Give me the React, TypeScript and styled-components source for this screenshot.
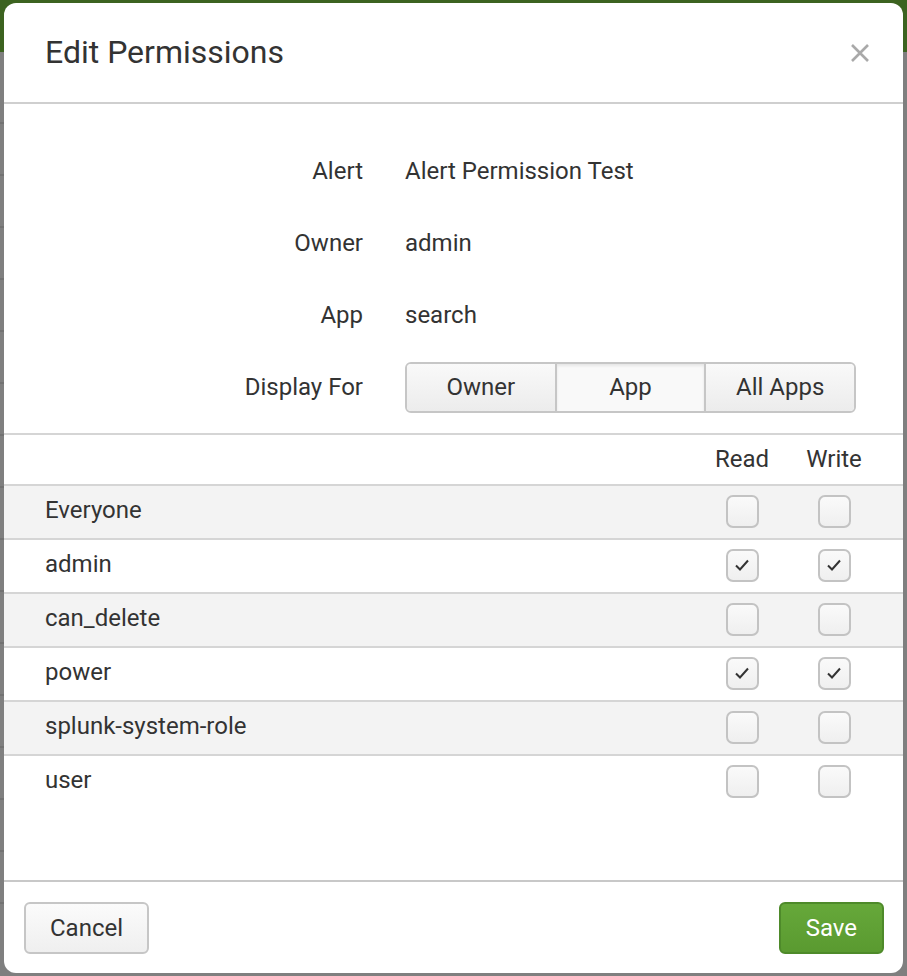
import React, {useState} from "react";
import styled, {createGlobalStyle} from "styled-components";

const GlobalStyle = createGlobalStyle`
  html, body {
    margin: 0;
    padding: 0;
    background: #7f7f7f;
  }
  body {
    font-family: Roboto, "Liberation Sans", Arial, sans-serif;
    color: #333;
  }
`;

const Page = styled.div`
  position: relative;
  width: 907px;
  height: 976px;
  overflow: hidden;
  background: #7f7f7f;
`;

const TopBar = styled.div`
  height: 52px;
  background: #3c6320;
`;

const Backdrop = styled.div`
  display: flex;
  flex-direction: column;
  gap: 50px;
  padding-top: 70px;
`;

const BackdropLine = styled.div`
  height: 2px;
  width: 8px;
  background: #727272;
`;

const ModalView = styled.div`
  position: absolute;
  top: 3px;
  left: 4px;
  width: 899px;
  height: 970px;
  background: #fff;
  border-radius: 12px;
  display: flex;
  flex-direction: column;
  overflow: hidden;
`;

const ModalHeader = styled.div`
  height: 99px;
  flex-shrink: 0;
  padding: 0 31px 0 41px;
  display: flex;
  align-items: center;
  justify-content: space-between;
  border-bottom: 2px solid #cfcfcf;
`;

const Title = styled.h2`
  margin: 0;
  padding-bottom: 2px;
  font-size: 32px;
  font-weight: 400;
  color: #333;
`;

const CloseButton = styled.button`
  width: 24px;
  height: 24px;
  padding: 0;
  border: none;
  background: transparent;
  cursor: pointer;
  display: flex;
  align-items: center;
  justify-content: center;
`;

const ModalBody = styled.div`
  flex: 1;
  display: flex;
  flex-direction: column;
`;

const Form = styled.div`
  display: grid;
  grid-template-columns: 359px 1fr;
  grid-auto-rows: 72px;
  column-gap: 42px;
  padding: 31px 0 10px;
  border-bottom: 2px solid #d5d5d5;
`;

const FieldLabel = styled.div`
  display: flex;
  align-items: center;
  justify-content: flex-end;
  font-size: 24px;
  color: #333;
`;

const FieldValue = styled.div`
  display: flex;
  align-items: center;
  font-size: 24px;
  color: #333;
`;

const Segmented = styled.div`
  display: flex;
  width: 451px;
  height: 51px;
  box-sizing: border-box;
  border: 2px solid #c6c6c6;
  border-radius: 6px;
  overflow: hidden;
`;

const SegmentButton = styled.button<{active: boolean}>`
  flex: 1;
  border: none;
  border-left: 2px solid #c6c6c6;
  font-family: inherit;
  font-size: 24px;
  color: #333;
  cursor: pointer;
  background: ${(p) => (p.active ? "#f9f9f9" : "linear-gradient(#f9f9f9, #ececec)")};
  box-shadow: ${(p) => (p.active ? "inset 0 2px 3px rgba(0,0,0,0.08)" : "none")};
  &:first-child {
    border-left: none;
  }
`;

const Table = styled.div`
  display: flex;
  flex-direction: column;
`;

const TableRow = styled.div<{striped?: boolean; height: number}>`
  display: grid;
  grid-template-columns: 1fr 92px 92px;
  align-items: center;
  height: ${(p) => p.height}px;
  padding: 0 23px 0 41px;
  background: ${(p) => (p.striped ? "#f3f3f3" : "#fff")};
  border-bottom: 2px solid #d5d5d5;
  font-size: 24px;
  color: #333;
  &:last-child {
    border-bottom: none;
  }
`;

const HeadCell = styled.div`
  text-align: center;
  font-size: 24px;
  padding-bottom: 2px;
`;

const RoleName = styled.div`
  padding-bottom: 4px;
`;

const CheckCell = styled.div`
  display: flex;
  justify-content: center;
  padding-bottom: 2px;
`;

const CheckBox = styled.button`
  width: 33px;
  height: 33px;
  box-sizing: border-box;
  padding: 0;
  border: 2px solid #c3c3c3;
  border-radius: 7px;
  background: linear-gradient(#fafafa, #efefef);
  display: flex;
  align-items: center;
  justify-content: center;
  cursor: pointer;
`;

const ModalFooter = styled.div`
  flex-shrink: 0;
  height: 93px;
  box-sizing: border-box;
  padding: 20px 19px 0 20px;
  display: flex;
  justify-content: space-between;
  align-items: flex-start;
  border-top: 2px solid #c8c8c8;
`;

const FooterButton = styled.button<{primary?: boolean}>`
  height: 52px;
  box-sizing: border-box;
  padding: 0 ${(p) => (p.primary ? "25px" : "24px")};
  border-radius: 6px;
  font-family: inherit;
  font-size: 24px;
  cursor: pointer;
  color: ${(p) => (p.primary ? "#fff" : "#333")};
  border: 2px solid ${(p) => (p.primary ? "#4e8a2a" : "#c6c6c6")};
  background: ${(p) => (p.primary ? "linear-gradient(#66a83a, #5a9a30)" : "linear-gradient(#fbfbfb, #efefef)")};
`;

const CheckMark = () => (
    <svg width="16" height="14" viewBox="0 0 16 14">
        <path d="M2 7.5 L6 11.5 L14 2.5" fill="none" stroke="#333" strokeWidth="2" />
    </svg>
);

const CloseIcon = () => (
    <svg width="20" height="20" viewBox="0 0 20 20">
        <path d="M2 2 L18 18 M18 2 L2 18" stroke="#a9a9a9" strokeWidth="2.6" />
    </svg>
);

interface Role {
    name: string;
    read: boolean;
    write: boolean;
}

const initialRoles: Role[] = [
    {name: "Everyone", read: false, write: false},
    {name: "admin", read: true, write: true},
    {name: "can_delete", read: false, write: false},
    {name: "power", read: true, write: true},
    {name: "splunk-system-role", read: false, write: false},
    {name: "user", read: false, write: false},
];

const App = () => {
    const [displayFor, setDisplayFor] = useState<string>("App");
    const [roles, setRoles] = useState<Role[]>(initialRoles);

    const toggle = (idx: number, key: "read" | "write"): void => {
        setRoles(roles.map((r, i) => (i === idx ? {...r, [key]: !r[key]} : r)));
    };

    return (
        <Page>
            <GlobalStyle />
            <TopBar />
            <Backdrop>
                {[0, 1, 2, 3, 4, 5, 6, 7, 8, 9, 10, 11, 12, 13, 14, 15].map((i) => (
                    <BackdropLine key={i} />
                ))}
            </Backdrop>

            <ModalView>
                <ModalHeader>
                    <Title>Edit Permissions</Title>
                    <CloseButton>
                        <CloseIcon />
                    </CloseButton>
                </ModalHeader>

                <ModalBody>
                    <Form>
                        <FieldLabel>Alert</FieldLabel>
                        <FieldValue>Alert Permission Test</FieldValue>
                        <FieldLabel>Owner</FieldLabel>
                        <FieldValue>admin</FieldValue>
                        <FieldLabel>App</FieldLabel>
                        <FieldValue>search</FieldValue>
                        <FieldLabel>Display For</FieldLabel>
                        <FieldValue>
                            <Segmented>
                                {["Owner", "App", "All Apps"].map((opt) => (
                                    <SegmentButton key={opt} active={displayFor === opt} onClick={() => setDisplayFor(opt)}>
                                        {opt}
                                    </SegmentButton>
                                ))}
                            </Segmented>
                        </FieldValue>
                    </Form>

                    <Table>
                        <TableRow height={49}>
                            <div />
                            <HeadCell>Read</HeadCell>
                            <HeadCell>Write</HeadCell>
                        </TableRow>
                        {roles.map((role, idx) => (
                            <TableRow key={role.name} height={52} striped={idx % 2 === 0}>
                                <RoleName>{role.name}</RoleName>
                                <CheckCell>
                                    <CheckBox onClick={() => toggle(idx, "read")}>
                                        {role.read && <CheckMark />}
                                    </CheckBox>
                                </CheckCell>
                                <CheckCell>
                                    <CheckBox onClick={() => toggle(idx, "write")}>
                                        {role.write && <CheckMark />}
                                    </CheckBox>
                                </CheckCell>
                            </TableRow>
                        ))}
                    </Table>
                </ModalBody>

                <ModalFooter>
                    <FooterButton>Cancel</FooterButton>
                    <FooterButton primary>Save</FooterButton>
                </ModalFooter>
            </ModalView>
        </Page>
    );
};

export default App;
